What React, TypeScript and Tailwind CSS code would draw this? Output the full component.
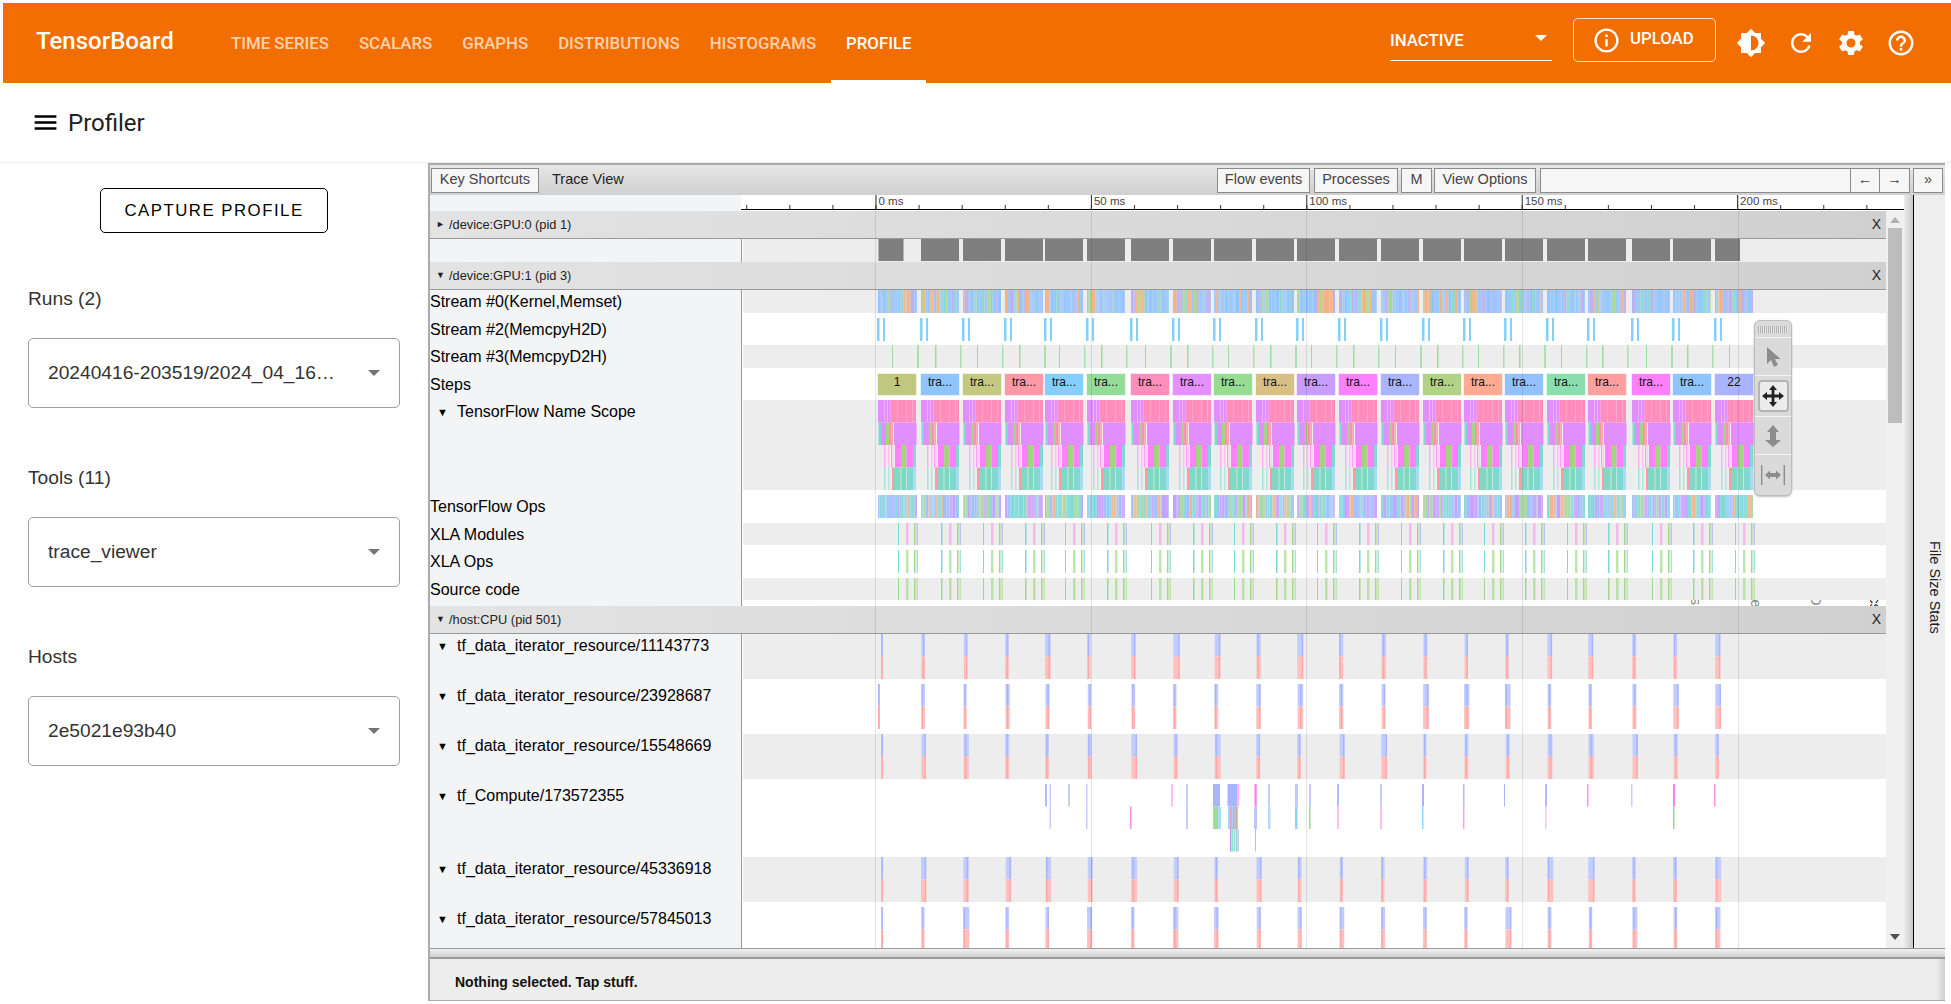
import React from "react";
import { MdBrightnessMedium, MdRefresh, MdSettings, MdHelpOutline, MdInfoOutline, MdMenu } from "react-icons/md";

const STARTS = [877, 920, 962, 1004, 1044, 1086, 1130, 1172, 1213, 1255, 1296, 1338, 1380, 1422, 1463, 1504, 1546, 1587, 1631, 1672, 1714];
const STEP_COLORS = ["#c0c77f", "#8fc4ff", "#c3c980", "#ff99a8", "#85cfff", "#95dc9a", "#ff8ebd", "#e491ff", "#98dc93", "#d8bf85", "#c99dff", "#ff80ff", "#a9b5ff", "#b2d385", "#ffab93", "#93c0ff", "#89dfae", "#ff9f9f", "#ff80ff", "#8fc4ff", "#a9b3ff"];

function rng(seed: number) {
  let s = seed;
  return () => {
    s = (s * 16807) % 2147483647;
    return (s % 100000) / 100000;
  };
}

type B = { x: number; y: number; w: number; h: number; c: string; o?: number };

function Bars({ h, bars, children }: { h: number; bars: B[]; children?: React.ReactNode }) {
  return (
    <svg width={1143} height={h} viewBox={`743 0 1143 ${h}`} className="block">
      {bars.map((b, i) => (
        <rect key={i} x={b.x} y={b.y} width={b.w} height={b.h} fill={b.c} opacity={b.o ?? 1} />
      ))}
      {children}
    </svg>
  );
}

function stripes(y: number, h: number, palette: string[], seed: number): B[] {
  const out: B[] = [];
  const r = rng(seed);
  STARTS.forEach((s, idx) => {
    let x = s + 1;
    const end = s + (idx === 0 ? 40 : 39);
    while (x < end) {
      const w = Math.min(1 + r() * 3.2, end - x);
      out.push({ x, y, w, h, c: palette[Math.floor(r() * palette.length)], o: 0.85 + r() * 0.15 });
      x += w;
    }
  });
  return out;
}

const BLUE_MIX = ["#8fc4ff", "#8fc4ff", "#8fc4ff", "#86d8d0", "#f5b080", "#a8d88a", "#b8b0f0", "#8fc4ff", "#a3c8f8"];
const OPS_MIX = ["#7fd9d9", "#7fd9d9", "#c5a0ff", "#9fc0ff", "#9fc0ff", "#7fd9d9", "#c5a0ff", "#a8d8a0", "#f0b48c"];

const gpu0: B[] = STARTS.map((s, i) => {
  const x = i === 0 ? 878.5 : s + 1;
  const w = i === 0 ? 25 : i === 20 ? 25 : 38;
  return { x, y: 0, w, h: 22, c: "#7f7f7f" };
});
const stream0 = stripes(0, 23, BLUE_MIX, 91);
const stream2: B[] = STARTS.flatMap((s) => [
  { x: s, y: 5, w: 2.5, h: 23, c: "#85cfff" },
  { x: s + 6, y: 5, w: 2, h: 23, c: "#85cfff" },
]);
const stream3: B[] = STARTS.flatMap((s, i) => [
  { x: s + 15, y: 0, w: i % 2 ? 1.5 : 1, h: 23, c: "#9cdca0" },
  { x: s + 40, y: 0, w: i % 3 === 0 ? 2 : 1.5, h: 23, c: "#a9e0ad" },
]);
const TPL: [number, number, number, string][] = [
  [0, 1, 13, "#e18fff"], [0, 14, 39, "#ff8ebd"], [0, 7, 8, "#f0b0ff"], [0, 10, 11, "#f0b0ff"], [0, 13, 14, "#f7a0e0"], [0, 20, 20.6, "#ffb0d0"], [0, 29, 29.7, "#ffb0d0"], [0, 35, 35.7, "#ffb0d0"],
  [1, 1.5, 4, "#7fd8d6"], [1, 4, 9, "#e18fff"], [1, 9, 12, "#a3d47f"], [1, 12, 14.5, "#ff8ebd"], [1, 14.5, 16, "#ffa8a0"], [1, 17, 39.5, "#e18fff"],
  [2, 7, 8.5, "#ffb0f0"], [2, 11, 12.5, "#ffc0f4"], [2, 14, 15, "#ff9cf8"], [2, 15.6, 16.6, "#ffc0f4"], [2, 18, 24, "#ff80ff"], [2, 24, 29.5, "#a3d47f"], [2, 29.5, 36, "#ff80ff"], [2, 36, 39, "#80d8d0"],
  [3, 7, 8.5, "#a8e4d8"], [3, 11, 12.5, "#b0e8dc"], [3, 15, 17, "#ff9ba0"], [3, 17, 23, "#80d8c8"], [3, 23, 24.5, "#a8e0c8"], [3, 24.5, 29, "#7ed8c0"], [3, 29, 29.7, "#c8f0e8"], [3, 29.7, 36, "#80d8d0"], [3, 36, 39, "#a8dcf4"],
];
const scope: B[] = STARTS.flatMap((s) =>
  TPL.map(([l, a, b, c]) => ({ x: s + a, y: l * 22.5, w: b - a, h: 22.5, c }))
);
const ops = stripes(5, 23, OPS_MIX, 2024);
const xlaBars = (y: number, cols: string[]): B[] =>
  STARTS.flatMap((s, i) => [
    { x: s + 21, y, w: i % 2 ? 1.5 : 1, h: 23, c: cols[0] },
    { x: s + 29, y, w: 2.5, h: 23, c: cols[1], o: 0.75 },
    { x: s + 37, y, w: 1.5, h: 23, c: cols[2] },
    { x: s + 39.5, y, w: 1.5, h: 23, c: cols[3], o: 0.8 },
  ]);
const xlaMods = xlaBars(0, ["#7fd8d6", "#f5a8ea", "#a3d88a", "#b4b8f8"]);
const xlaOps = xlaBars(5, ["#7fd8d6", "#a8dc90", "#a3d88a", "#90dce0"]);
const source = xlaBars(0, ["#a3d88a", "#a8dc90", "#a3d88a", "#b4e0a0"]);

function hostBars(yTop: number, seed: number): B[] {
  const r = rng(seed);
  return STARTS.flatMap((s, i) => {
    const w = i === 0 ? 2 : 3 + r() * 3;
    const x = s + (i === 0 ? (seed % 2 ? 4 : 1) : 1 + r() * 0.8);
    const inner = x + r() * (w - 1);
    return [
      { x, y: yTop, w, h: 22.5, c: "#c2ccff" },
      { x: inner, y: yTop, w: 1.5, h: 22.5, c: "#a9b5ff" },
      { x, y: yTop + 22.5, w, h: 22.5, c: "#ffc0c0" },
      { x: inner, y: yTop + 22.5, w: 1.5, h: 22.5, c: "#ffa8a8" },
    ];
  });
}

const L = [0 + 5, 27.5, 50];
const computeRaw: [number, number, number, string][] = [
  [0, 1045, 2, "#b0bcff"], [0, 1049.5, 1.5, "#c5ceff"], [0, 1068, 2, "#c5ceff"], [0, 1086, 1.5, "#c5ceff"],
  [1, 1049.5, 1.5, "#c5ceff"], [1, 1086, 1.5, "#c5ceff"], [1, 1130, 1.5, "#ff90e8"],
  [0, 1171, 2, "#ffbdf0"], [0, 1186, 2, "#c5ceff"], [0, 1213, 7, "#a9b5ff"], [0, 1227.5, 10, "#a9b5ff"], [0, 1237.5, 1.5, "#ffb0ee"], [0, 1254, 3, "#ffc0f0"], [0, 1255, 1.5, "#ff80e8"], [0, 1268, 2, "#c5ceff"], [0, 1295, 3, "#c0caff"], [0, 1309, 2, "#c5ceff"], [0, 1337, 2, "#b0bcff"], [0, 1380, 2, "#c5ceff"], [0, 1422, 2, "#a9b5ff"], [0, 1463, 1.5, "#b0bcff"], [0, 1504, 1, "#a9b5ff"], [0, 1545, 2, "#b0bcff"], [0, 1587, 1.5, "#ff90e8"], [0, 1631, 1.5, "#c5ceff"], [0, 1673, 2, "#ff80e8"], [0, 1714, 1.5, "#ff90e8"],
  [1, 1186, 2, "#c5ceff"], [1, 1213, 1.5, "#a9cfff"], [1, 1214, 4, "#a0d890"], [1, 1218, 3, "#a9dcff"], [1, 1228, 10, "#a9cfff"], [1, 1230, 1.5, "#e0a0c0"], [1, 1233, 1.5, "#e0a0c0"], [1, 1235.5, 1.5, "#c0b890"], [1, 1254, 3, "#b9c6ff"], [1, 1268, 2.5, "#b0dcff"], [1, 1295, 2.5, "#90cfff"], [1, 1309, 1.5, "#8fe09f"], [1, 1337, 2, "#ffc0f0"], [1, 1380, 2, "#ffc0f0"], [1, 1422, 1.5, "#90d8ff"], [1, 1463, 1.5, "#ff9bf5"], [1, 1545, 1.5, "#ffc0f0"], [1, 1673, 1.5, "#a0d890"],
  [2, 1230, 1.5, "#c090f0"], [2, 1232, 1, "#90e0d0"], [2, 1233.5, 1.5, "#90e0d0"], [2, 1235.5, 1.5, "#90e0d0"], [2, 1237, 2, "#d8c8ff"], [2, 1255, 1, "#8fd0ff"],
];
const compute: B[] = computeRaw.map(([l, x, w, c]) => ({ x, y: L[l], w, h: 22.5, c }));

function Triangle() {
  return <span className="w-[27px] shrink-0 pl-[7px] text-[11px]">▼</span>;
}

function Row({
  label,
  arrow,
  gray,
  rowH,
  labelPad,
  children,
}: {
  label?: string;
  arrow?: boolean;
  gray?: boolean;
  rowH: string;
  labelPad?: boolean;
  children: React.ReactNode;
}) {
  return (
    <div className={`flex ${rowH}`}>
      <div className={`w-[312px] shrink-0 border-r border-[#999] bg-[#f3f4f6] text-[16px] leading-[24px] text-black whitespace-nowrap flex items-start ${labelPad ? "pt-[5px]" : ""}`}>
        {arrow && <Triangle />}
        {label && <span>{label}</span>}
      </div>
      <div className={`ml-px flex-1 overflow-hidden ${gray ? "bg-[#ededed]" : "bg-white"}`}>{children}</div>
    </div>
  );
}

function ProcessHeader({ text, open }: { text: string; open?: boolean }) {
  return (
    <div className="flex h-[28px] items-center border-b border-[#999] bg-linear-to-r from-[#e3e3e3] to-[#d0d0d0] pl-[6px] pr-[5px] text-[12.8px] text-[#222]">
      <span className="w-[13px] text-[9px]">{open ? "▼" : "►"}</span>
      <span className="flex-1">{text}</span>
      <span className="text-[14px] text-[#222]">X</span>
    </div>
  );
}

function ToolBtn({ w, children }: { w: string; children: React.ReactNode }) {
  return (
    <div className={`flex h-[25px] items-center justify-center border border-[#8b8b8b] bg-[#f6f6f6] text-[14.5px] text-[#444] ${w}`}>
      {children}
    </div>
  );
}

function Select({ text }: { text: string }) {
  return (
    <div className="mt-[27px] flex h-[70px] items-center justify-between rounded-[5px] border border-[#9e9e9e] pl-[19px] pr-[19px] text-[19.2px] text-[#333]">
      <span className="whitespace-nowrap">{text}</span>
      <svg width="12" height="6" viewBox="0 0 12 6" className="shrink-0"><path d="M0 0h12L6 6z" fill="#757575" /></svg>
    </div>
  );
}

function Ruler() {
  const ticks = [];
  for (let i = -3; i <= 23; i++) ticks.push(875.5 + i * 43.08);
  const majors = [[0, "0 ms"], [1, "50 ms"], [2, "100 ms"], [3, "150 ms"], [4, "200 ms"]] as [number, string][];
  return (
    <svg width={1163} height={16} viewBox="741 195 1163 16" className="block">
      <rect x={741} y={209} width={1163} height={1} fill="#000" />
      {ticks.map((t, i) => (
        <rect key={i} x={t} y={205} width={1} height={4} fill="#333" />
      ))}
      {majors.map(([m, s]) => (
        <g key={s}>
          <rect x={875.5 + m * 215.4} y={195} width={1} height={15} fill="#333" />
          <text x={878.5 + m * 215.4} y={204.5} fontSize={11.5} fill="#444" fontFamily="Liberation Sans">{s}</text>
        </g>
      ))}
    </svg>
  );
}

function Toolbox() {
  return (
    <div className="absolute left-[1324px] top-[125px] flex h-[176px] w-[38px] flex-col rounded-[6px] border border-[#bdbdbd] bg-[#dadada] shadow-[0_1px_2px_rgba(0,0,0,0.25)]">
      <div className="flex h-[17px] items-center justify-center border-b border-[#f4f4f4]">
        <div className="h-[7px] w-[30px] bg-[repeating-linear-gradient(90deg,#b0b0b0_0_1px,#e6e6e6_1px_2px)]" />
      </div>
      <div className="flex h-[38px] items-center justify-center border-b border-[#f4f4f4]">
        <svg width="16" height="22" viewBox="0 0 16 22"><path d="M2 1v17l4-4 3 7 4-2-3-6h5.5z" fill="#8c8c8c" /></svg>
      </div>
      <div className="flex h-[41px] items-center justify-center border-b border-[#f4f4f4]">
        <div className="flex h-[32px] w-[31px] items-center justify-center rounded-[4px] border-2 border-[#b4b4b4] bg-[#ececec]">
          <svg width="22" height="22" viewBox="0 0 22 22"><path d="M11 0l4 5h-2.6v4.6H17V7l5 4-5 4v-2.6h-4.6V17H15l-4 5-4-5h2.6v-4.6H5V15L0 11l5-4v2.6h4.6V5H7z" fill="#222" /></svg>
        </div>
      </div>
      <div className="flex h-[38px] items-center justify-center border-b border-[#f4f4f4]">
        <svg width="16" height="22" viewBox="0 0 16 22"><path d="M8 0l6 7h-3v8h5l-8 7-8-7h5V7H2z" fill="#8c8c8c" /></svg>
      </div>
      <div className="flex flex-1 items-center justify-center">
        <svg width="26" height="20" viewBox="0 0 26 20"><path d="M1 0h1.4v20H1zM23.6 0H25v20h-1.4zM5 10l5-4.5V8h6V5.5l5 4.5-5 4.5V12h-6v2.500z" fill="#8c8c8c" /></svg>
      </div>
    </div>
  );
}

export default function App() {
  const sans = "[font-family:'Liberation_Sans',Arial,sans-serif]";
  return (
    <div className={`h-[1004px] w-[1951px] overflow-hidden bg-white ${sans}`}>
      <div className="pl-[3px] pt-[3px]">
        <header className="flex h-[80px] items-start bg-[#f26e00] text-white [font-family:Roboto,sans-serif]">
          <div className="ml-[33px] mt-[24px] w-[180px] text-[24px] font-medium leading-[28px]">TensorBoard</div>
          <nav className="flex h-[80px] text-[16.8px] font-medium">
            {["TIME SERIES", "SCALARS", "GRAPHS", "DISTRIBUTIONS", "HISTOGRAMS"].map((t) => (
              <div key={t} className="px-[15px] pt-[28px] text-white/70">{t}</div>
            ))}
            <div className="border-b-[3px] border-white px-[15px] pt-[28px] text-white">PROFILE</div>
          </nav>
          <div className="ml-auto mt-[15px] flex items-start pr-[35px]">
            <div className="mr-[21px] mt-[10px] flex h-[33px] w-[162px] items-start justify-between border-b border-white text-[16.8px] font-medium">
              <span>INACTIVE</span>
              <svg width="12" height="6" viewBox="0 0 12 6" className="mr-[5px] mt-[7px]"><path d="M0 0h12L6 6z" fill="#fff" /></svg>
            </div>
            <div className="mr-[20px] flex h-[44px] w-[143px] items-center rounded-[5px] border border-white/80 pl-[20px] text-[16.8px] font-medium">
              <MdInfoOutline size={29} className="mr-[9px] -ml-[2px]" />
              <span className="-mt-[2px]">UPLOAD</span>
            </div>
            <div className="flex gap-[20px] pt-[10px]">
              <MdBrightnessMedium size={30} />
              <MdRefresh size={30} />
              <MdSettings size={30} />
              <MdHelpOutline size={30} />
            </div>
          </div>
        </header>
      </div>

      <div className="flex h-[80px] items-center border-b border-[#ececec] pl-[31px] text-[#212121] [font-family:Roboto,sans-serif]">
        <MdMenu size={29} className="text-black" />
        <span className="ml-[8px] text-[24px]">Profiler</span>
      </div>

      <div className="flex">
        <aside className="w-[428px] shrink-0 px-[28px] text-[#333]">
          <div className="mt-[25px] flex justify-center">
            <div className="flex h-[45px] w-[228px] items-center justify-center rounded-[5px] border border-black text-[16.8px] tracking-[1.5px] text-black">CAPTURE PROFILE</div>
          </div>
          <div className="mt-[54px] text-[19.2px] leading-[24px]">Runs (2)</div>
          <Select text="20240416-203519/2024_04_16…" />
          <div className="mt-[58px] text-[19.2px] leading-[24px]">Tools (11)</div>
          <Select text="trace_viewer" />
          <div className="mt-[58px] text-[19.2px] leading-[24px]">Hosts</div>
          <Select text="2e5021e93b40" />
        </aside>

        <section className="flex h-[838px] w-[1517px] flex-col border-l-[2px] border-t-[2px] border-[#ababab]">
          <div className="flex h-[30px] items-center gap-0 bg-linear-to-b from-[#e6e6e6] to-[#d0d0d0] pl-px pr-[2px] text-[14.5px]">
            <ToolBtn w="w-[108px]">Key Shortcuts</ToolBtn>
            <span className="ml-[13px] text-[#222]">Trace View</span>
            <div className="flex-1" />
            <ToolBtn w="w-[93px]">Flow events</ToolBtn>
            <ToolBtn w="ml-[4px] w-[84px]">Processes</ToolBtn>
            <ToolBtn w="ml-[3px] w-[31px]">M</ToolBtn>
            <ToolBtn w="ml-[2px] w-[102px]">View Options</ToolBtn>
            <div className="ml-[4px] h-[25px] w-[311px] border border-[#8b8b8b] bg-[#f6f6f6]" />
            <ToolBtn w="w-[30px] -ml-px">←</ToolBtn>
            <ToolBtn w="w-[31px] -ml-px">→</ToolBtn>
            <ToolBtn w="ml-[3px] w-[30px]">»</ToolBtn>
          </div>

          <div className="flex h-[753px]">
            <div className="relative w-[1474px] shrink-0">
              <div className="flex h-[16px] bg-white">
                <div className="w-[311px] shrink-0 bg-[#f3f4f6]" />
                <Ruler />
              </div>
              <div className="flex h-[737px]">
                <div className="w-[1456px] shrink-0">
                  <ProcessHeader text="/device:GPU:0 (pid 1)" />
                  <Row rowH="h-[23px]" gray><div className="h-[22px]"><Bars h={22} bars={gpu0} /></div></Row>
                  <ProcessHeader text="/device:GPU:1 (pid 3)" open />
                  <Row rowH="h-[23px]" gray label="Stream #0(Kernel,Memset)"><Bars h={23} bars={stream0} /></Row>
                  <Row rowH="h-[32px]" labelPad label="Stream #2(MemcpyH2D)"><Bars h={32} bars={stream2} /></Row>
                  <Row rowH="h-[23px]" gray label="Stream #3(MemcpyD2H)"><Bars h={23} bars={stream3} /></Row>
                  <Row rowH="h-[32px]" labelPad label="Steps">
                    <Bars h={32} bars={[]}>
                      {STARTS.map((s, i) => (
                        <g key={s}>
                          <rect x={s + 0.5} y={5.5} width={39} height={22} fill={STEP_COLORS[i]} stroke="#fff" strokeOpacity={0.55} />
                          <text x={s + 20} y={18} textAnchor="middle" fontSize={12} fill="#111" fontFamily="Liberation Sans">
                            {i === 0 ? "1" : i === 20 ? "22" : "tra..."}
                          </text>
                        </g>
                      ))}
                    </Bars>
                  </Row>
                  <Row rowH="h-[90px]" gray arrow label="TensorFlow Name Scope"><Bars h={90} bars={scope} /></Row>
                  <Row rowH="h-[33px]" labelPad label="TensorFlow Ops"><Bars h={33} bars={ops} /></Row>
                  <Row rowH="h-[22px]" gray label="XLA Modules"><Bars h={22} bars={xlaMods} /></Row>
                  <Row rowH="h-[33px]" labelPad label="XLA Ops"><Bars h={33} bars={xlaOps} /></Row>
                  <Row rowH="h-[22px]" gray label="Source code"><Bars h={22} bars={source} /></Row>
                  <div className="flex h-[6px]">
                    <div className="w-[312px] border-r border-[#999] bg-[#f3f4f6]" />
                  </div>
                  <ProcessHeader text="/host:CPU (pid 501)" open />
                  <Row rowH="h-[45px]" gray arrow label="tf_data_iterator_resource/11143773"><Bars h={45} bars={hostBars(0, 7)} /></Row>
                  <Row rowH="h-[55px]" labelPad arrow label="tf_data_iterator_resource/23928687"><Bars h={55} bars={hostBars(5, 12)} /></Row>
                  <Row rowH="h-[45px]" gray arrow label="tf_data_iterator_resource/15548669"><Bars h={45} bars={hostBars(0, 33)} /></Row>
                  <Row rowH="h-[78px]" labelPad arrow label="tf_Compute/173572355"><Bars h={78} bars={compute} /></Row>
                  <Row rowH="h-[45px]" gray arrow label="tf_data_iterator_resource/45336918"><Bars h={45} bars={hostBars(0, 45)} /></Row>
                  <Row rowH="h-[46px]" labelPad arrow label="tf_data_iterator_resource/57845013"><Bars h={46} bars={hostBars(5, 57)} /></Row>
                </div>
                <div className="relative w-[18px] shrink-0 bg-[#f0f0f0]">
                  <div className="ml-[2px] mt-[17px] h-[195px] w-[14px] bg-[#bdbdbd]" />
                  <svg width="10" height="6" viewBox="0 0 10 6" className="absolute left-[4px] top-[6px]"><path d="M5 0l5 6H0z" fill="#b0b0b0" /></svg>
                  <svg width="10" height="6" viewBox="0 0 10 6" className="absolute bottom-[8px] left-[4px]"><path d="M0 0h10L5 6z" fill="#505050" /></svg>
                </div>
              </div>
              <div className="pointer-events-none absolute inset-y-0 left-[445px] w-px bg-black/10" />
              <div className="pointer-events-none absolute inset-y-0 left-[661px] w-px bg-black/10" />
              <div className="pointer-events-none absolute inset-y-0 left-[876px] w-px bg-black/10" />
              <div className="pointer-events-none absolute inset-y-0 left-[1092px] w-px bg-black/10" />
              <div className="pointer-events-none absolute inset-y-0 left-[1308px] w-px bg-black/10" />
              <Toolbox />
            </div>
            <div className="w-[9px] shrink-0 bg-linear-to-r from-[#ededed] to-[#c8c8c8]" />
            <div className="flex w-[32px] shrink-0 flex-col items-center gap-[38px] border-l border-black bg-[#eeeeee] pt-[31px] text-[14.5px] text-[#888] [writing-mode:vertical-rl]">
              <span className="text-[#222]">File Size Stats</span>
              <span className="text-[#222]">Metrics</span>
              <span>Frame Data</span>
              <span>Input Latency</span>
              <span>Alerts</span>
            </div>
          </div>

          <div className="h-[9px] border-t border-[#999] bg-linear-to-b from-[#f2f2f2] to-[#cfcfcf]" />
          <div className="flex h-[44px] flex-1 border-t-2 border-b border-t-[#9a9a9a] border-b-[#aaaaaa] bg-[#ededed]">
            <div className="flex-1 pl-[25px] pt-[14px] text-[14px] font-bold leading-[18px] text-[#111]">Nothing selected. Tap stuff.</div>
            <div className="w-[9px] bg-linear-to-r from-[#ededed] to-[#cfcfcf]" />
          </div>
        </section>
      </div>
    </div>
  );
}
